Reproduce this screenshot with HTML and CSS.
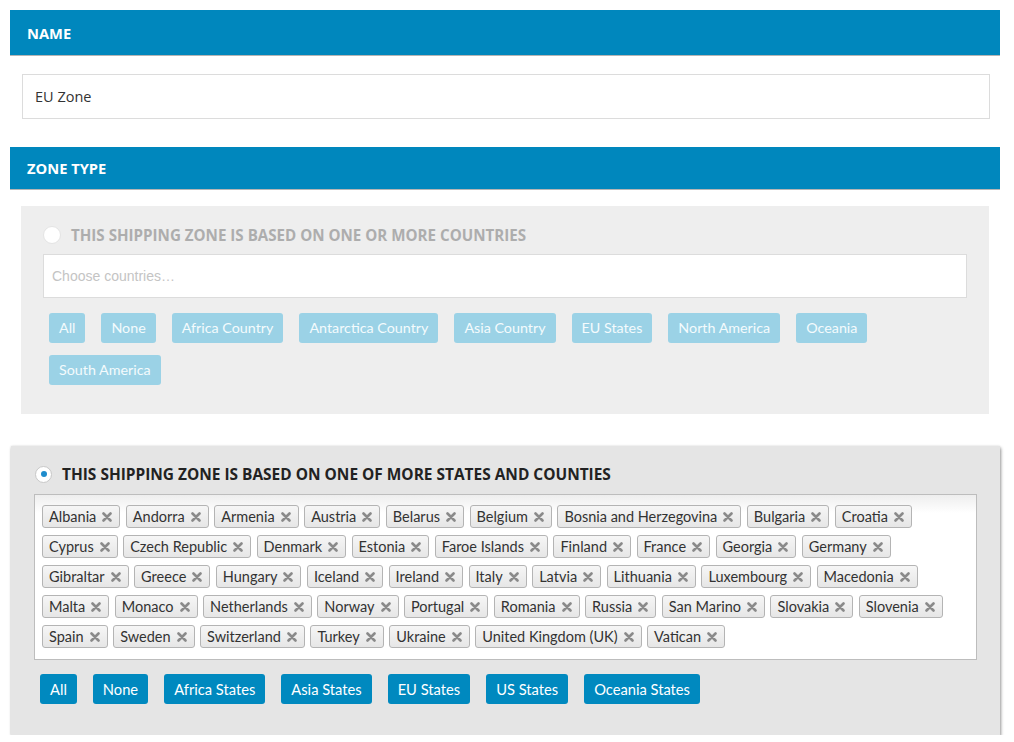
FILE: index.html
```html
<!DOCTYPE html>
<html>
<head>
<meta charset="utf-8">
<link rel="stylesheet" href="styles.css">
</head>
<body>
<div class="page">
  <div class="section-head">NAME</div>
  <div class="name-row">
    <div class="text-input">EU Zone</div>
  </div>

  <div class="section-head short">ZONE TYPE</div>

  <div class="panel panel-off">
    <div class="radio-row">
      <span class="radio"></span>
      <span class="radio-label">THIS SHIPPING ZONE IS BASED ON ONE OR MORE COUNTRIES</span>
    </div>
    <div class="choose-input">Choose countries…</div>
    <div class="btn-row">
      <span class="btn light">All</span>
      <span class="btn light">None</span>
      <span class="btn light">Africa Country</span>
      <span class="btn light">Antarctica Country</span>
      <span class="btn light">Asia Country</span>
      <span class="btn light">EU States</span>
      <span class="btn light">North America</span>
      <span class="btn light">Oceania</span>
      <span class="btn light">South America</span>
    </div>
  </div>

  <div class="panel panel-on">
    <div class="radio-row">
      <span class="radio checked"></span>
      <span class="radio-label">THIS SHIPPING ZONE IS BASED ON ONE OF MORE STATES AND COUNTIES</span>
    </div>
    <div class="tag-box" id="tags"></div>
    <div class="btn-row">
      <span class="btn">All</span>
      <span class="btn">None</span>
      <span class="btn">Africa States</span>
      <span class="btn">Asia States</span>
      <span class="btn">EU States</span>
      <span class="btn">US States</span>
      <span class="btn">Oceania States</span>
    </div>
  </div>
</div>
<script src="app.js"></script>
</body>
</html>
```

FILE: app.js
```js
var names = ["Albania","Andorra","Armenia","Austria","Belarus","Belgium","Bosnia and Herzegovina","Bulgaria","Croatia","Cyprus","Czech Republic","Denmark","Estonia","Faroe Islands","Finland","France","Georgia","Germany","Gibraltar","Greece","Hungary","Iceland","Ireland","Italy","Latvia","Lithuania","Luxembourg","Macedonia","Malta","Monaco","Netherlands","Norway","Portugal","Romania","Russia","San Marino","Slovakia","Slovenia","Spain","Sweden","Switzerland","Turkey","Ukraine","United Kingdom (UK)","Vatican"];
var box = document.getElementById("tags");
var x = '<svg class="tag-x" width="10" height="10" viewBox="0 0 10 10"><path d="M1.5 1.5 L8.5 8.5 M8.5 1.5 L1.5 8.5" stroke="#8a8a8a" stroke-width="2.6" stroke-linecap="round"/></svg>';
names.forEach(function (n) {
  var t = document.createElement("span");
  t.className = "tag";
  t.innerHTML = '<span class="tag-text"></span>' + x;
  t.firstChild.textContent = n;
  box.appendChild(t);
});
```

FILE: styles.css
```css
* { box-sizing: border-box; }
body {
  margin: 0;
  background: #fff;
  font-family: "Open Sans", "Noto Sans", sans-serif;
}
.page {
  padding: 10px 14px 0 10px;
}
.section-head {
  height: 46px;
  background: #0087bd;
  border-bottom: 1px solid #b5b5b5;
  color: #fff;
  font-weight: 700;
  font-size: 14.7px;
  line-height: 46px;
  padding-left: 17px;
}
.section-head.short {
  height: 43px;
  line-height: 42px;
}
.name-row {
  padding: 18px 10px 28px 12px;
}
.text-input {
  height: 45px;
  border: 1px solid #dcdcdc;
  background: #fff;
  font-size: 14.5px;
  color: #333;
  line-height: 43px;
  padding-left: 12px;
}
.panel-off {
  margin-top: 16px;
  margin-left: 11px;
  margin-right: 11px;
  background: #eeeeee;
  padding: 19px 22px 29px 22px;
}
.radio-row {
  display: flex;
  align-items: center;
  height: 20px;
  gap: 10px;
}
.radio {
  width: 18px;
  height: 18px;
  border-radius: 50%;
  background: #fff;
  border: 1px solid #e4e4e4;
  position: relative;
  flex: none;
}
.radio-label {
  font-weight: 700;
  font-size: 15.15px;
  color: #adadad;
  white-space: nowrap;
}
.choose-input {
  margin-top: 9px;
  height: 44px;
  background: #fff;
  border: 1px solid #dcdcdc;
  font-family: "Liberation Sans", Arial, sans-serif;
  font-size: 14px;
  color: #c4c4c4;
  line-height: 42px;
  padding-left: 8px;
}
.btn-row {
  display: flex;
  flex-wrap: wrap;
  column-gap: 16px;
  row-gap: 12px;
  padding-left: 6px;
  margin-top: 15px;
}
.btn {
  height: 30px;
  line-height: 30px;
  padding: 0 10px;
  border-radius: 3px;
  background: #0089bf;
  color: #fff;
  font-family: Lato, "Open Sans", sans-serif;
  font-size: 14.7px;
}
.btn.light {
  background: #9bd2e6;
  color: #f4fbfd;
  font-size: 14.3px;
}
.panel-on {
  margin-top: 32px;
  margin-left: 1px;
  background: #e5e5e5;
  padding: 18px 23px 31px 23px;
  box-shadow: 1px 2px 3px rgba(0, 0, 0, 0.38), 0 0 2px rgba(0, 0, 0, 0.12);
}
.panel-on .radio-row {
  gap: 10px;
  padding-left: 1px;
}
.panel-on .radio {
  border: 1px solid #c8c8c8;
  width: 17px;
  height: 17px;
}
.radio.checked::after {
  content: "";
  position: absolute;
  left: 4.5px;
  top: 4.5px;
  width: 6px;
  height: 6px;
  border-radius: 50%;
  background: #1e8ccc;
}
.panel-on .radio-label {
  color: #222;
  font-size: 15.45px;
}
.panel-on .btn-row {
  margin-top: 14px;
}
.tag-box {
  margin-top: 10px;
  height: 166px;
  border: 1px solid #bdbdbd;
  background: linear-gradient(#eeeeee 0px, #ffffff 18px);
  padding: 10px 7px 0 7px;
  display: flex;
  flex-wrap: wrap;
  align-content: flex-start;
  column-gap: 5.5px;
  row-gap: 7px;
}
.tag {
  height: 23px;
  display: flex;
  align-items: center;
  gap: 6px;
  padding: 0 7px 0 6px;
  border: 1px solid #b4b4b4;
  border-radius: 3px;
  background: linear-gradient(#f6f6f6, #e6e6e6);
  font-family: Lato, "Open Sans", sans-serif;
  font-size: 14.5px;
  color: #333;
}
.tag-x {
  display: block;
  margin-top: 1px;
}
```
